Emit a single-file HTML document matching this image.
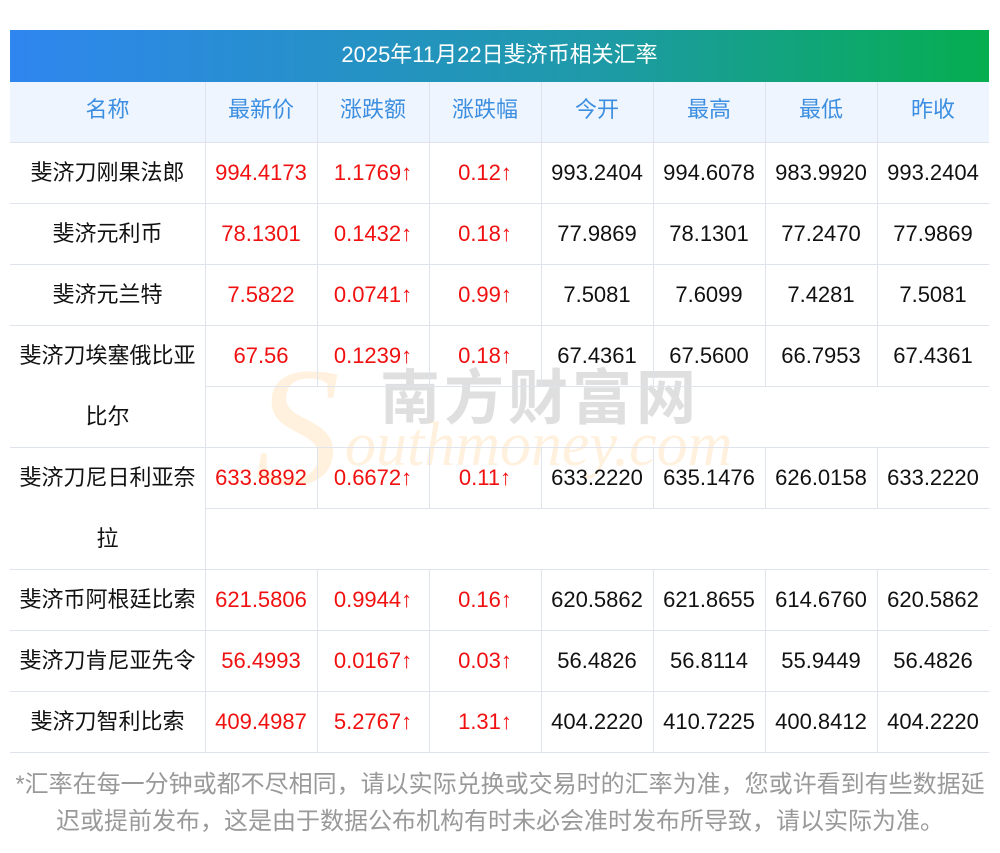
<!DOCTYPE html>
<html><head><meta charset="utf-8"><style>
body{margin:0;width:1000px;height:853px;background:#fff;position:relative;overflow:hidden;font-family:"Liberation Sans","Noto Sans CJK SC",sans-serif;}
.t{position:absolute;left:10px;top:30px;width:979px;height:52px;background:linear-gradient(90deg,#2f86ef,#1e9aa8 60%,#05ae4f);color:#fff;font-size:22px;line-height:50px;text-align:center;}
.hd{position:absolute;left:10px;top:82px;width:979px;height:60px;background:#eff5fe;}
.h{position:absolute;background:#dfe3ec;height:1px;}
.v{position:absolute;background:#dfe3ec;width:1px;}
.c{position:absolute;height:61px;line-height:61px;text-align:center;font-size:22px;color:#111;white-space:nowrap;}
.hc{color:#3c8fe0;line-height:56px;}
.r{color:#f01010;}
.n{line-height:61px;}
.fn{position:absolute;left:0;width:1000px;text-align:center;color:#999;font-size:24px;line-height:37px;top:766px;}
.wm1{position:absolute;left:380px;top:350px;font-size:60px;color:rgba(150,150,150,0.3);letter-spacing:4px;font-weight:bold;}
.wm2{position:absolute;left:345px;top:410px;font-size:62px;color:rgba(255,200,120,0.25);font-family:"Liberation Serif",serif;font-style:italic;}
.wmS{position:absolute;left:255px;top:330px;font-size:170px;color:rgba(255,200,120,0.25);font-family:"Liberation Serif",serif;font-style:italic;}
</style></head><body>
<div class="t">2025年11月22日斐济币相关汇率</div>
<div class="hd"></div>
<div class="wmS">S</div><div class="wm1">南方财富网</div><div class="wm2">outhmoney.com</div>
<div id="g"></div>
<div class="fn">*汇率在每一分钟或都不尽相同，请以实际兑换或交易时的汇率为准，您或许看到有些数据延<br>迟或提前发布，这是由于数据公布机构有时未必会准时发布所导致，请以实际为准。</div>
<script>
var cols=[10,205,317,429,541,653,765,877,989];
var H='';
function cell(x0,x1,y,txt,cls,h){H+='<div class="c '+(cls||'')+'" style="left:'+x0+'px;width:'+(x1-x0)+'px;top:'+y+'px;'+(h?'height:'+h+'px;white-space:normal;':'')+'">'+txt+'</div>';}
var hdr=['名称','最新价','涨跌额','涨跌幅','今开','最高','最低','昨收'];
hdr.forEach(function(t,i){cell(cols[i],cols[i+1],82,t,'hc');});
var rows=[
['斐济刀刚果法郎','994.4173','1.1769↑','0.12↑','993.2404','994.6078','983.9920','993.2404',1],
['斐济元利币','78.1301','0.1432↑','0.18↑','77.9869','78.1301','77.2470','77.9869',1],
['斐济元兰特','7.5822','0.0741↑','0.99↑','7.5081','7.6099','7.4281','7.5081',1],
['斐济刀埃塞俄比亚<br>比尔','67.56','0.1239↑','0.18↑','67.4361','67.5600','66.7953','67.4361',2],
['斐济刀尼日利亚奈<br>拉','633.8892','0.6672↑','0.11↑','633.2220','635.1476','626.0158','633.2220',2],
['斐济币阿根廷比索','621.5806','0.9944↑','0.16↑','620.5862','621.8655','614.6760','620.5862',1],
['斐济刀肯尼亚先令','56.4993','0.0167↑','0.03↑','56.4826','56.8114','55.9449','56.4826',1],
['斐济刀智利比索','409.4987','5.2767↑','1.31↑','404.2220','410.7225','400.8412','404.2220',1]];
var y=142;
H+='<div class="h" style="left:10px;width:979px;top:142px"></div>';
rows.forEach(function(r){
 var h=61*r[8];
 cell(cols[0],cols[1],y,r[0],'n',h);
 for(var i=1;i<8;i++){cell(cols[i],cols[i+1],y,r[i],i<4?'r':'');}
 for(var i=1;i<8;i++){H+='<div class="v" style="left:'+cols[i]+'px;top:'+y+'px;height:'+(i==1?h:61)+'px"></div>';}
 if(r[8]==2)H+='<div class="h" style="left:205px;width:784px;top:'+(y+61)+'px"></div>';
 y+=h;
 H+='<div class="h" style="left:10px;width:979px;top:'+y+'px"></div>';
});
for(var i=1;i<8;i++){H+='<div class="v" style="left:'+cols[i]+'px;top:82px;height:60px"></div>';}
document.getElementById('g').innerHTML=H;
</script>
</body></html>
